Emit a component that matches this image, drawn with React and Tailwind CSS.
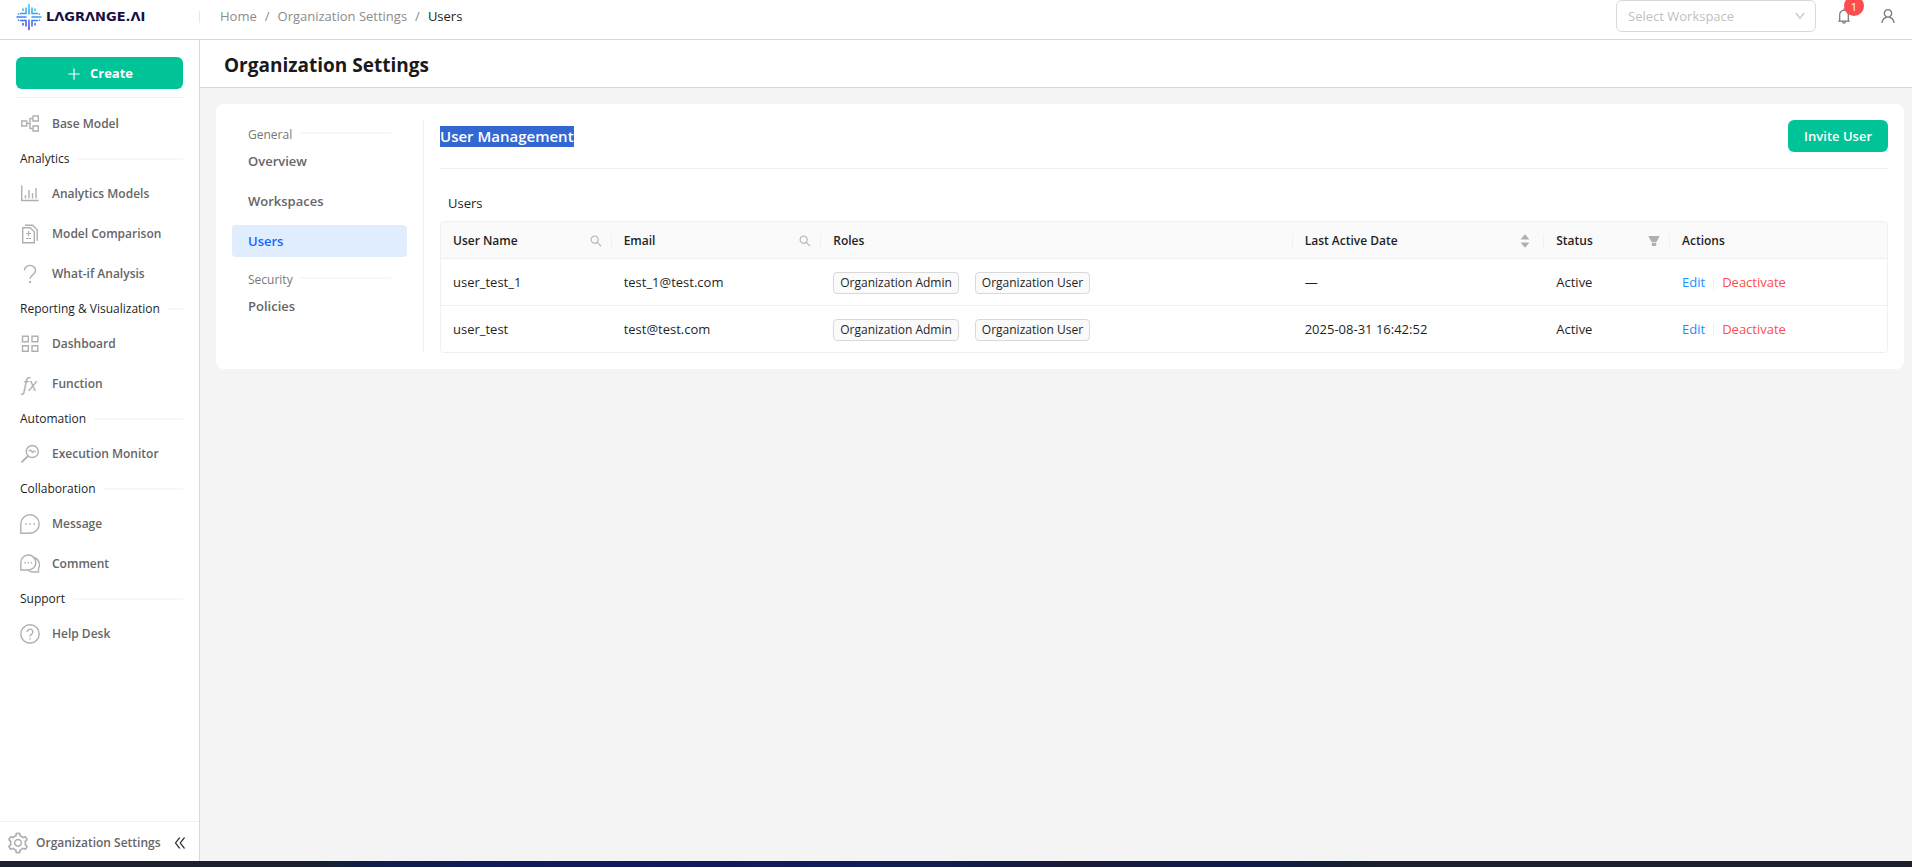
import React from 'react';
import {
  AiFillCaretDown,
  AiFillCaretUp,
  AiFillFilter,
  AiOutlineBell,
  AiOutlineDoubleLeft,
  AiOutlineDown,
  AiOutlinePlus,
  AiOutlineSearch,
  AiOutlineSetting,
  AiOutlineUser,
} from 'react-icons/ai';

// Shared wrapper for the sidebar line icons
const LineIcon = ({ children }) => (
  <svg
    viewBox="0 0 20 20"
    className="h-5 w-5 shrink-0"
    fill="none"
    stroke="currentColor"
    strokeWidth="1.4"
    aria-hidden="true"
  >
    {children}
  </svg>
);

const BaseModelIcon = () => (
  <LineIcon>
    <path d="M1.7 7h5v5h-5zM13 2h5.3v5H13zM13 12h5.3v5H13zM6.7 9.5H10M13 4.5h-3v10h3" />
  </LineIcon>
);

const AnalyticsIcon = () => (
  <LineIcon>
    <path d="M1.7 1.5v15h17M5.5 14.5V11M9 14.5V6M12.5 14.5V9M16 14.5V4" />
  </LineIcon>
);

const CompareIcon = () => (
  <LineIcon>
    <path d="M2.7 3.7H10l4.3 4v11H2.7zM5 1.3h7.5l4.7 4.4v11" />
    <path d="M6 9.5h5M8.5 7v5M6 14.5h5" strokeWidth="1.2" />
  </LineIcon>
);

const QuestionIcon = () => (
  <LineIcon>
    <path d="M4.500 6.500a5.500 5 0 1 1 8.800 3.900c-2 1.400-3.300 2-3.300 4.600" />
    <path d="M10 17v2" strokeWidth="2" />
  </LineIcon>
);

const DashboardIcon = () => (
  <LineIcon>
    <path d="M2.5 2.2h5.800v5.600H2.500zM12 2.200h5.800v5.600H12zM2.500 11.700h5.800v5.600H2.500zM12 11.700h5.800v5.600H12z" />
  </LineIcon>
);

const FunctionIcon = () => (
  <span aria-hidden="true" className="w-5 text-center font-['Open_Sans'] text-lg leading-5 font-normal italic">
    fx
  </span>
);

const MonitorIcon = () => (
  <LineIcon>
    <circle cx="12.3" cy="7.5" r="6" />
    <path d="M8 12l-6.5 6.3" strokeWidth="1.8" />
    <path d="M8.5 7l2-1 2 2.5L13.800 7l2.200 1" strokeWidth="1.3" />
  </LineIcon>
);

const MessageIcon = () => (
  <LineIcon>
    <path d="M.8 19.2V10A9.200 9.200 0 1 1 10 19.200z" />
    <path d="M5 10h1.600M9.200 10h1.600M13.400 10H15" strokeWidth="1.6" />
  </LineIcon>
);

const CommentIcon = () => (
  <LineIcon>
    <path d="M.8 16V8.700A7.500 7.500 0 1 1 8.300 16z" />
    <path d="M14 3.500a7.500 7.500 0 0 1 4.500 11V18h-6a7.500 7.500 0 0 1-4-1.500" />
    <path d="M4.500 8.700h1.400M7.600 8.700H9M10.700 8.700h1.400" strokeWidth="1.6" />
  </LineIcon>
);

const HelpIcon = () => (
  <LineIcon>
    <circle cx="10" cy="10" r="9.2" />
    <path d="M7.200 8a2.800 2.800 0 1 1 4.300 2.300c-1 .6-1.500 1-1.500 2.200M10 14v1.500" />
  </LineIcon>
);

const NAV = [
  { items: [{ icon: BaseModelIcon, label: 'Base Model' }] },
  {
    title: 'Analytics',
    items: [
      { icon: AnalyticsIcon, label: 'Analytics Models' },
      { icon: CompareIcon, label: 'Model Comparison' },
      { icon: QuestionIcon, label: 'What-if Analysis' },
    ],
  },
  {
    title: 'Reporting & Visualization',
    items: [
      { icon: DashboardIcon, label: 'Dashboard' },
      { icon: FunctionIcon, label: 'Function' },
    ],
  },
  { title: 'Automation', items: [{ icon: MonitorIcon, label: 'Execution Monitor' }] },
  {
    title: 'Collaboration',
    items: [
      { icon: MessageIcon, label: 'Message' },
      { icon: CommentIcon, label: 'Comment' },
    ],
  },
  { title: 'Support', items: [{ icon: HelpIcon, label: 'Help Desk' }] },
];

const USERS = [
  { name: 'user_test_1', email: 'test_1@test.com', lastActive: '—', status: 'Active' },
  { name: 'user_test', email: 'test@test.com', lastActive: '2025-08-31 16:42:52', status: 'Active' },
];

const ROLES = ['Organization Admin', 'Organization User'];

const LogoMark = () => (
  <svg viewBox="0 0 26 28" className="h-7 w-[26px]" fill="none" strokeLinecap="round" aria-hidden="true">
    <defs>
      <linearGradient id="mark" gradientUnits="userSpaceOnUse" x1="16" y1="1" x2="10" y2="27">
        <stop offset="0" stopColor="#2fd0f5" />
        <stop offset="0.5" stopColor="#3c8df0" />
        <stop offset="1" stopColor="#5a2de0" />
      </linearGradient>
    </defs>
    <g stroke="url(#mark)" strokeWidth="1.5">
      <path d="M13 1.5V11M13 17v9.5M1 14h9M16 14h9" />
      <path d="M10 5v5.500H4.500M16 5v5.500h5.500M10 23v-5.500H4.500M16 23v-5.500h5.500" />
      <path d="M7 6v1.500M19 6v1.500M7 20.500V22M19 20.500V22M2.500 11v.2M23.500 11v.2M2.500 17v.2M23.500 17v.2" />
    </g>
  </svg>
);

const Header = () => (
  <header className="flex h-10 shrink-0 items-start border-b border-[#d9d9d9] bg-white">
    <div className="flex h-8 w-[200px] shrink-0 items-center justify-between pt-0.5 pl-4">
      <a href="#home" aria-label="Lagrange.AI" className="flex items-center gap-1">
        <LogoMark />
        <span className="font-['DejaVu_Sans'] text-[13px] font-bold text-[#17103f]">LΛGRΛNGE.ΛI</span>
      </a>
      <span className="h-3 w-px bg-[#e8e8e8]" />
    </div>
    <nav aria-label="Breadcrumb" className="flex h-8 flex-1 items-center gap-2 pt-0.5 pl-5 text-[#8c8c8c]">
      <a href="#home">Home</a>
      <span>/</span>
      <a href="#organization">Organization Settings</a>
      <span>/</span>
      <span className="text-[#1f1f1f]">Users</span>
    </nav>
    <div className="flex h-8 items-center pr-[15px]">
      <div className="relative">
        <select
          aria-label="Select Workspace"
          className="h-8 w-[200px] appearance-none rounded-md border border-[#d9d9d9] bg-white px-[11px] pt-0.5 text-[#bfbfbf]"
        >
          <option>Select Workspace</option>
        </select>
        <AiOutlineDown className="pointer-events-none absolute top-2.5 right-2.5 h-3 w-3 text-[#b5b5b5]" />
      </div>
      <button type="button" aria-label="Notifications" className="relative ml-[19px] text-[#7a7a7a]">
        <AiOutlineBell className="h-[18px] w-[18px]" />
        <span className="absolute -top-[11px] left-[9px] flex h-5 w-5 items-center justify-center rounded-full bg-[#ff4d4f] text-[11px] leading-none text-white">
          1
        </span>
      </button>
      <button type="button" aria-label="Account" className="ml-[26px] text-[#7a7a7a]">
        <AiOutlineUser className="h-[18px] w-[18px]" />
      </button>
    </div>
  </header>
);

const Sidebar = () => (
  <aside className="flex w-[200px] shrink-0 flex-col border-r border-[#d9d9d9] bg-white">
    <div className="px-4 pt-[17px]">
      <button
        type="button"
        className="flex h-8 w-full items-center justify-center gap-2 rounded-md bg-[#00c497] pt-0.5 font-bold text-white"
      >
        <AiOutlinePlus className="h-4 w-4" />
        Create
      </button>
      <hr className="mt-2 border-[#f0f0f0]" />
    </div>
    <nav aria-label="Main" className="flex-1 pt-1.5 pr-4 pl-5 text-xs">
      {NAV.map(({ title, items }) => (
        <div key={title || 'top'}>
          {title && (
            <div className="flex h-[30px] items-center gap-2 text-[#1f1f1f]">
              <span className="whitespace-nowrap">{title}</span>
              <span className="h-0.5 flex-1 bg-[#f7f7f7]" />
            </div>
          )}
          {items.map(({ icon: Icon, label }) => (
            <a key={label} href="#nav" className="flex h-10 items-center gap-3 font-semibold text-[#666]">
              <span className="flex text-[#b0b0b0]">
                <Icon />
              </span>
              {label}
            </a>
          ))}
        </div>
      ))}
    </nav>
    <div className="flex h-10 items-center border-t border-[#f0f0f0] pt-0.5 pr-[11px] pl-1.5 text-xs">
      <a href="#organization" className="flex flex-1 items-center gap-1.5 font-semibold text-[#666]">
        <AiOutlineSetting className="h-6 w-6 text-[#b0b0b0]" />
        Organization Settings
      </a>
      <button type="button" aria-label="Collapse sidebar" className="text-[#333]">
        <AiOutlineDoubleLeft className="h-4 w-4" />
      </button>
    </div>
  </aside>
);

const MenuHeading = ({ children }) => (
  <div className="flex h-[25px] items-center gap-2 px-4 pt-1 text-xs text-[#777]">
    {children}
    <span className="mb-1 h-0.5 flex-1 bg-[#f7f7f7]" />
  </div>
);

const MenuItem = ({ active, children }) => (
  <a
    href="#settings"
    className={
      active
        ? 'flex h-8 items-center rounded bg-[#e0edff] px-4 pt-0.5 font-semibold text-[#1268ff]'
        : 'flex h-8 items-center rounded px-4 pt-0.5 font-semibold text-[#666]'
    }
  >
    {children}
  </a>
);

const SettingsMenu = () => (
  <nav aria-label="Organization settings" className="w-[192px] shrink-0 border-r border-[#f0f0f0] pr-4">
    <MenuHeading>General</MenuHeading>
    <div className="flex flex-col gap-2">
      <MenuItem>Overview</MenuItem>
      <MenuItem>Workspaces</MenuItem>
      <MenuItem active>Users</MenuItem>
    </div>
    <div className="mt-2">
      <MenuHeading>Security</MenuHeading>
      <MenuItem>Policies</MenuItem>
    </div>
  </nav>
);

const HeadCell = ({ children, tool, last }) => (
  <th scope="col" className="h-[37px] border-b border-[#f0f0f0] p-0 pt-0.5 text-left font-semibold">
    <div
      className={
        last
          ? 'flex h-3.5 items-center justify-between px-3'
          : 'flex h-3.5 items-center justify-between border-r border-[#f0f0f0] px-3'
      }
    >
      {children}
      {tool}
    </div>
  </th>
);

const Cell = ({ children }) => (
  <td className="h-[47px] border-b border-[#f0f0f0] px-3 pt-0.5 group-last:h-[46px] group-last:border-b-0">
    {children}
  </td>
);

const SearchButton = ({ label }) => (
  <button type="button" aria-label={label} className="-mr-1 text-[#b0b0b0]">
    <AiOutlineSearch className="h-3.5 w-3.5" />
  </button>
);

const UsersTable = () => (
  <div className="overflow-hidden rounded border border-[#f0f0f0]">
    <table className="w-full table-fixed border-separate border-spacing-0 text-[#1f1f1f]">
      <colgroup>
        <col className="w-[11.8%]" />
        <col className="w-[14.5%]" />
        <col className="w-[32.6%]" />
        <col className="w-[17.4%]" />
        <col className="w-[8.7%]" />
        <col className="w-[15%]" />
      </colgroup>
      <thead className="bg-[#fafafa] text-xs">
        <tr>
          <HeadCell tool={<SearchButton label="Search user name" />}>User Name</HeadCell>
          <HeadCell tool={<SearchButton label="Search email" />}>Email</HeadCell>
          <HeadCell>Roles</HeadCell>
          <HeadCell
            tool={
              <button type="button" aria-label="Sort by date" className="flex flex-col text-[#b0b0b0]">
                <AiFillCaretUp className="-mb-1 h-3 w-3" />
                <AiFillCaretDown className="h-3 w-3" />
              </button>
            }
          >
            Last Active Date
          </HeadCell>
          <HeadCell
            tool={
              <button type="button" aria-label="Filter status" className="-mr-1 text-[#b0b0b0]">
                <AiFillFilter className="h-3.5 w-3.5" />
              </button>
            }
          >
            Status
          </HeadCell>
          <HeadCell last>Actions</HeadCell>
        </tr>
      </thead>
      <tbody>
        {USERS.map((user) => (
          <tr key={user.name} className="group">
            <Cell>{user.name}</Cell>
            <Cell>{user.email}</Cell>
            <Cell>
              <div className="flex gap-4 text-xs">
                {ROLES.map((role) => (
                  <span
                    key={role}
                    className="flex h-[22px] items-center rounded border border-[#d9d9d9] bg-[#fafafa] px-1.5 whitespace-nowrap"
                  >
                    {role}
                  </span>
                ))}
              </div>
            </Cell>
            <Cell>{user.lastActive}</Cell>
            <Cell>{user.status}</Cell>
            <Cell>
              <div className="flex items-center gap-2">
                <a href="#edit" className="text-[#1890ff]">
                  Edit
                </a>
                <span className="h-3.5 w-px bg-[#f0f0f0]" />
                <a href="#deactivate" className="text-[#ff4d4f]">
                  Deactivate
                </a>
              </div>
            </Cell>
          </tr>
        ))}
      </tbody>
    </table>
  </div>
);

const UserManagement = () => (
  <section className="min-w-0 flex-1 pl-4">
    <div className="flex items-center justify-between border-b border-[#f0f0f0] pb-4">
      <h2 className="bg-[#3367d1] text-[15px] leading-[21px] font-semibold text-white">User Management</h2>
      <button type="button" className="h-8 rounded-md bg-[#00c497] px-4 pt-0.5 font-semibold text-white">
        Invite User
      </button>
    </div>
    <div className="mt-4 flex h-9 items-center px-2 pt-0.5 text-[#1f1f1f]">Users</div>
    <UsersTable />
  </section>
);

const App = () => (
  <div className="flex h-screen flex-col overflow-hidden bg-white font-['Open_Sans',sans-serif] text-[13px]">
    <Header />
    <div className="flex min-h-0 flex-1">
      <Sidebar />
      <main className="flex min-w-0 flex-1 flex-col bg-[#f4f4f4]">
        <div className="flex h-12 items-center border-b border-[#d9d9d9] bg-white px-6 pt-1">
          <h1 className="text-[19px] font-bold text-[#1a1a1a]">Organization Settings</h1>
        </div>
        <div className="mt-4 mr-2 ml-4 flex rounded-lg bg-white p-4">
          <SettingsMenu />
          <UserManagement />
        </div>
      </main>
    </div>
    <div className="h-1.5 shrink-0 bg-[linear-gradient(90deg,#1a212c_0%,#1a212c_16%,#0e1f50_20%,#111a62_34%,#0f1f54_48%,#1a1b38_56%,#0e1c4c_65%,#1a212c_72%,#1a212c_100%)]" />
  </div>
);

export default App;
